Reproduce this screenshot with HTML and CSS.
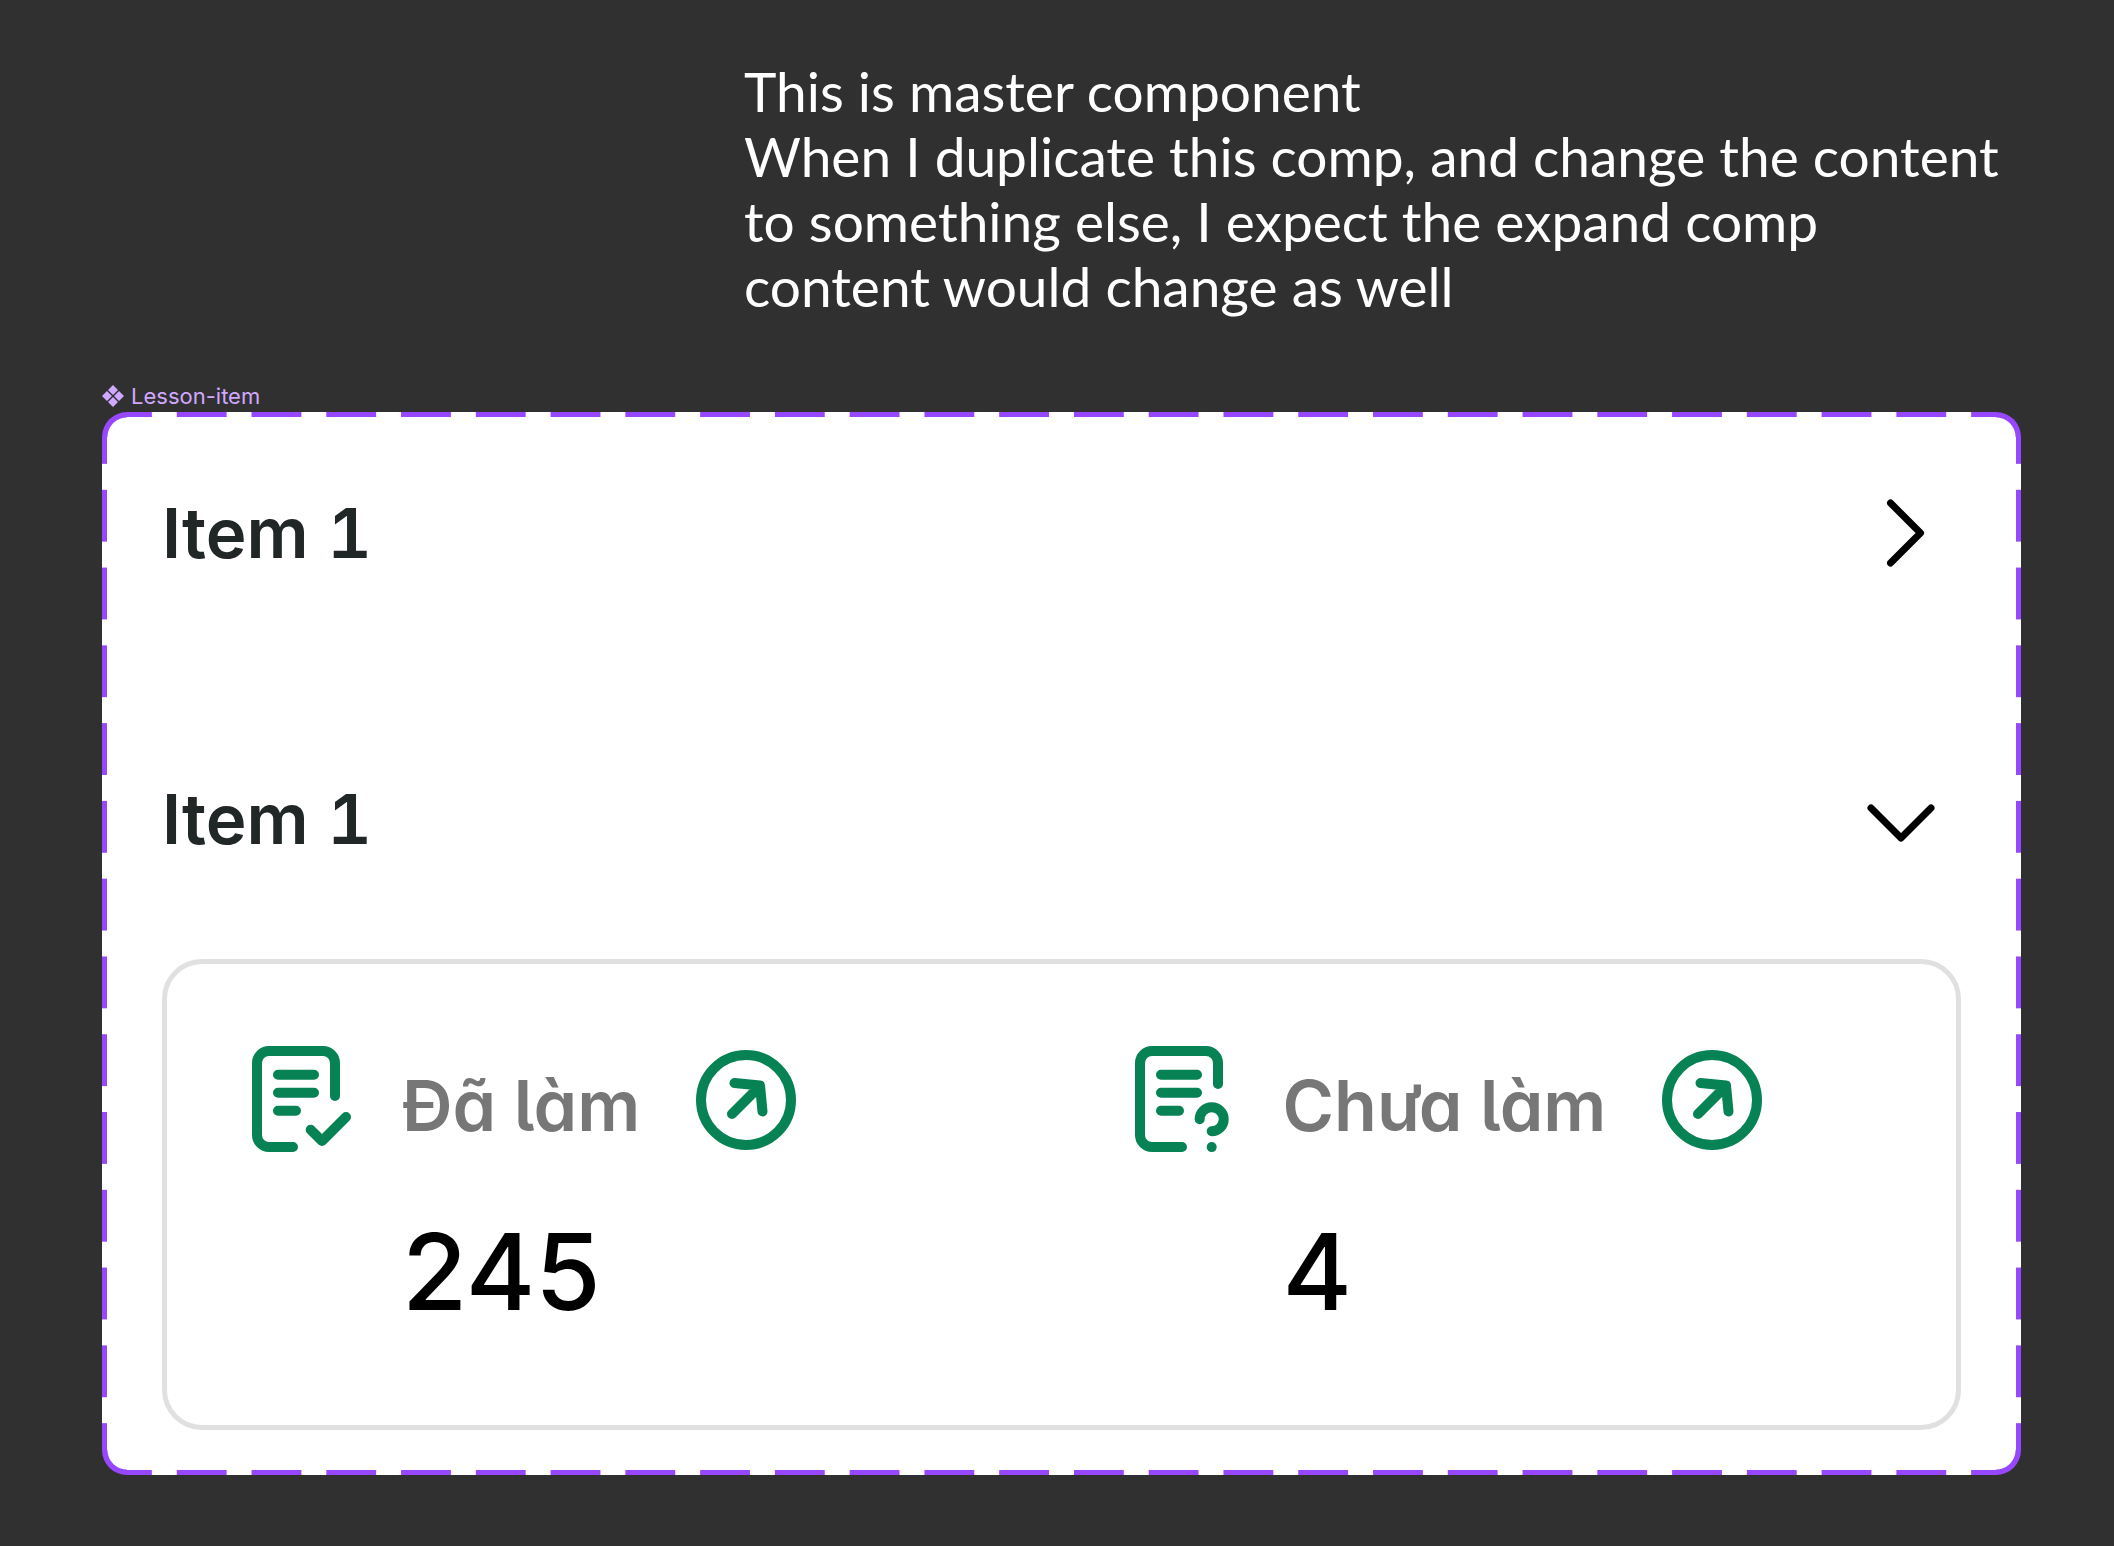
FILE: index.html
```
<!DOCTYPE html>
<html lang="vi">
<head>
    <meta charset="UTF-8">
    <meta name="viewport" content="width=device-width, initial-scale=1.0">
    <title>Lesson item</title>
    <link rel="stylesheet" href="styles.css">
</head>
<body>
    <p class="note" lang="en">This is master component<br>
        When I duplicate this comp, and change the content to something else, I expect the expand comp content would change as well</p>

    <div class="tag">
        <svg width="22" height="22" viewBox="0 0 22 22" aria-hidden="true">
            <path d="M11 0l5 5-5 5-5-5zM11 12l5 5-5 5-5-5zM5 6l5 5-5 5-5-5zM17 6l5 5-5 5-5-5z"/>
        </svg>
        <span>Lesson-item</span>
    </div>

    <main class="card">
        <div class="item">
            <h2>Item 1</h2>
            <button type="button" class="toggle" aria-label="Expand" aria-expanded="false">
                <svg width="90" height="90" viewBox="0 0 90 90"><path d="M34.5 15l30 30-30 30"/></svg>
            </button>
        </div>

        <div class="item open">
            <h2>Item 1</h2>
            <button type="button" class="toggle" aria-label="Collapse" aria-expanded="true">
                <svg width="90" height="90" viewBox="0 0 90 90"><path d="M15 34l30 30 30-30"/></svg>
            </button>
        </div>

        <section class="panel">
            <div class="stat">
                <svg class="icon" width="130" height="140" viewBox="0 0 130 140" aria-hidden="true">
                    <path d="M96 66V33a12 12 0 0 0-12-12H30a12 12 0 0 0-12 12v72a12 12 0 0 0 12 12h24"/>
                    <path d="M39 44.7h36M39 62.7h36M39 80.7h18"/>
                    <path d="M71.7 99.7L83 111l24-24"/>
                </svg>
                <span class="label">Đã làm</span>
                <button type="button" class="go" aria-label="Đã làm">
                    <svg class="icon" width="100" height="100" viewBox="0 0 100 100">
                        <circle cx="50" cy="50" r="45"/>
                        <path d="M36 64L64 36M38.5 33L64 35.5 66.5 61.5"/>
                    </svg>
                </button>
                <strong class="value">245</strong>
            </div>

            <div class="stat">
                <svg class="icon" width="130" height="140" viewBox="0 0 130 140" aria-hidden="true">
                    <path d="M98 54V33a12 12 0 0 0-12-12H32a12 12 0 0 0-12 12v72a12 12 0 0 0 12 12h30"/>
                    <path d="M41 44.7h36M41 62.7h36M41 80.7h18"/>
                    <path d="M79.7 89.3a12 12 0 1 1 12 12M91.7 117v.1"/>
                </svg>
                <span class="label">Chưa làm</span>
                <button type="button" class="go" aria-label="Chưa làm">
                    <svg class="icon" width="100" height="100" viewBox="0 0 100 100">
                        <circle cx="50" cy="50" r="45"/>
                        <path d="M36 64L64 36M38.5 33L64 35.5 66.5 61.5"/>
                    </svg>
                </button>
                <strong class="value">4</strong>
            </div>
        </section>
    </main>
</body>
</html>
```
FILE: styles.css
```
* {
    box-sizing: border-box;
}

body {
    margin: 0;
    padding: 59px 93px 71px 102px;
    background-color: #303030;
    font-family: Inter, "Liberation Sans", sans-serif;
}

.note {
    margin: 0 0 64px;
    padding: 0 10px 0 642px;
    font-family: Lato, "Open Sans", sans-serif;
    font-size: 55px;
    line-height: 65px;
    color: #fff;
}

.tag {
    display: flex;
    align-items: center;
    gap: 7px;
    margin-bottom: 3px;
    font-size: 22px;
    line-height: 26px;
    color: #d1a8ff;
}

.tag svg {
    fill: #d1a8ff;
}

/* dashed outline: four curved corners, then one repeating strip per side */
.card {
    padding: 76px 60px 45px;
    border-radius: 25px;
    background:
        radial-gradient(circle at 100% 100%, #fff 19px, #9747ff 20px) 0 0 / 25px 25px no-repeat,
        radial-gradient(circle at 0 100%, #fff 19px, #9747ff 20px) 100% 0 / 25px 25px no-repeat,
        radial-gradient(circle at 100% 0, #fff 19px, #9747ff 20px) 0 100% / 25px 25px no-repeat,
        radial-gradient(circle at 0 0, #fff 19px, #9747ff 20px) 100% 100% / 25px 25px no-repeat,
        linear-gradient(90deg, #9747ff 50px, transparent 50px) 0 0 / calc((100% + 25px) / 26) 5px repeat-x,
        linear-gradient(90deg, #9747ff 50px, transparent 50px) 0 100% / calc((100% + 25px) / 26) 5px repeat-x,
        linear-gradient(#9747ff 52px, transparent 52px) 0 0 / 5px calc((100% + 26px) / 14) repeat-y,
        linear-gradient(#9747ff 52px, transparent 52px) 100% 0 / 5px calc((100% + 26px) / 14) repeat-y,
        #fff;
}

.item {
    display: flex;
    align-items: center;
    justify-content: space-between;
    padding-right: 15px;
    margin-bottom: 196px;
}

.item.open {
    margin-bottom: 95px;
}

.item h2 {
    margin: 0;
    font-size: 69px;
    font-weight: 600;
    line-height: 90px;
    font-feature-settings: "tnum";
    color: #212627;
}

button {
    padding: 0;
    border: 0;
    background: none;
    cursor: pointer;
}

svg {
    display: block;
}

.toggle svg {
    fill: none;
    stroke: #000;
    stroke-width: 7;
    stroke-linecap: round;
    stroke-linejoin: round;
}

.panel {
    display: grid;
    grid-template-columns: 1fr 1fr;
    padding: 66px 16px 91px 12px;
    border: 5px solid #e0e0e0;
    border-radius: 40px;
}

.stat {
    display: grid;
    grid-template-columns: 130px auto 100px;
    justify-content: start;
    align-items: center;
    row-gap: 40px;
    padding-left: 60px;
}

.icon {
    fill: none;
    stroke: #078255;
    stroke-width: 10;
    stroke-linecap: round;
    stroke-linejoin: round;
}

.label {
    padding: 12px 56px 0 33px;
    font-size: 70px;
    font-weight: 600;
    line-height: 90px;
    font-feature-settings: "cv05", "cv11";
    white-space: nowrap;
    color: #777;
}

.value {
    grid-column: 2 / 4;
    padding-left: 33px;
    font-size: 106px;
    font-weight: 500;
    line-height: 124px;
    color: #000;
}
```
